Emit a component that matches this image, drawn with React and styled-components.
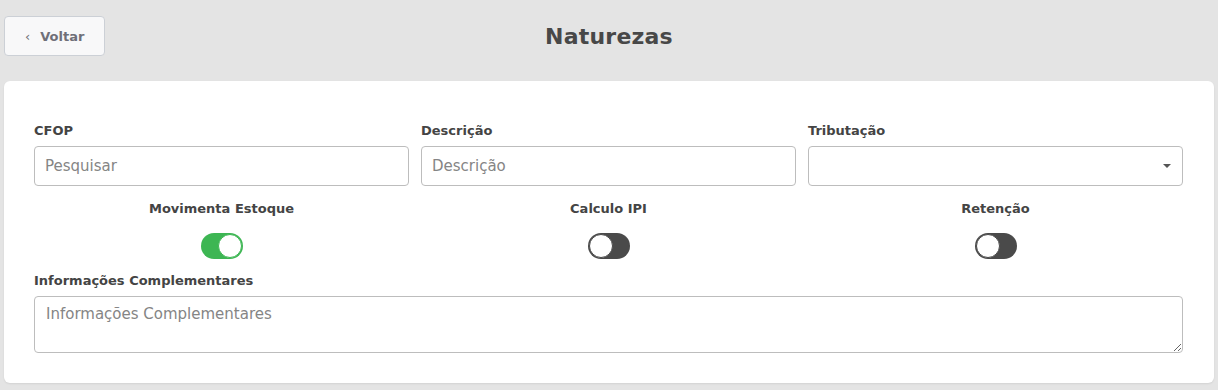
import React, { useState } from 'react';
import styled, { createGlobalStyle } from 'styled-components';

const GlobalStyle = createGlobalStyle`
  html, body {
    margin: 0;
    padding: 0;
    background: #e4e4e4;
    font-family: "DejaVu Sans", "Noto Sans", sans-serif;
  }
`;

const Page = styled.div`
  padding: 0 4px;
  min-height: 390px;
  box-sizing: border-box;
`;

const Header = styled.div`
  display: grid;
  grid-template-columns: 1fr auto 1fr;
  align-items: center;
  padding: 16px 0 25px;
`;

const BackButton = styled.button`
  justify-self: start;
  display: flex;
  align-items: center;
  gap: 10px;
  height: 40px;
  width: 101px;
  padding: 0 0 0 20px;
  border: 1px solid #ccd0d6;
  border-radius: 4px;
  background: #f8f8f9;
  color: #6f6f78;
  font-family: inherit;
  font-weight: bold;
  font-size: 13px;
  cursor: pointer;
  box-sizing: border-box;
`;

const Arrow = styled.span`
  font-weight: normal;
  font-size: 13px;
`;

const Title = styled.h1`
  margin: 0;
  font-size: 22px;
  font-weight: bold;
  color: #484848;
  letter-spacing: 0.2px;
`;

const Card = styled.div`
  background: #fff;
  border-radius: 6px;
  box-shadow: 0 1px 2px rgba(0, 0, 0, 0.08);
  padding: 42px 31px 30px 30px;
  display: flex;
  flex-direction: column;
`;

const Row = styled.div`
  display: grid;
  grid-template-columns: repeat(3, 1fr);
  column-gap: 12px;
`;

const Field = styled.div`
  display: flex;
  flex-direction: column;
  align-items: ${(p) => (p.$center ? 'center' : 'stretch')};
`;

const Label = styled.label`
  font-size: 13px;
  font-weight: bold;
  color: #444;
  margin-bottom: ${(p) => (p.$gap ? p.$gap : 7)}px;
  line-height: 16px;
`;

const Input = styled.input`
  height: 40px;
  box-sizing: border-box;
  border: 1px solid #bdbdbd;
  border-radius: 4px;
  padding: 0 10px;
  font-family: inherit;
  font-size: 15px;
  color: #444;
  outline: none;
  &::placeholder {
    color: #858585;
  }
`;

const SelectBox = styled.div`
  position: relative;
  height: 40px;
  box-sizing: border-box;
  border: 1px solid #bdbdbd;
  border-radius: 4px;
`;

const Caret = styled.span`
  position: absolute;
  right: 11px;
  top: 17px;
  width: 0;
  height: 0;
  border-left: 4px solid transparent;
  border-right: 4px solid transparent;
  border-top: 4px solid #555;
`;

const ToggleRow = styled(Row)`
  margin-top: 15px;
`;

const Switch = styled.button`
  position: relative;
  width: 42px;
  height: 26px;
  border-radius: 13px;
  border: none;
  padding: 0;
  background: ${(p) => (p.$on ? '#3db653' : '#4a4a4a')};
  cursor: pointer;
  &::after {
    content: '';
    position: absolute;
    top: 1px;
    left: ${(p) => (p.$on ? '17px' : '1px')};
    width: 24px;
    height: 24px;
    border-radius: 50%;
    background: #fff;
    box-sizing: border-box;
    border: 1px solid ${(p) => (p.$on ? '#3db653' : '#4a4a4a')};
  }
`;

const NotesField = styled(Field)`
  margin-top: 14px;
`;

const TextArea = styled.textarea`
  height: 57px;
  box-sizing: border-box;
  border: 1px solid #bdbdbd;
  border-radius: 4px;
  padding: 8px 11px;
  font-family: inherit;
  font-size: 15px;
  color: #444;
  outline: none;
  resize: vertical;
  &::placeholder {
    color: #858585;
  }
`;

export default function App() {
  const [toggles, setToggles] = useState({ estoque: true, ipi: false, retencao: false });
  const flip = (k) => setToggles((t) => ({ ...t, [k]: !t[k] }));

  return (
    <Page>
      <GlobalStyle />
      <Header>
        <BackButton>
          <Arrow>‹</Arrow>
          Voltar
        </BackButton>
        <Title>Naturezas</Title>
        <span />
      </Header>
      <Card>
        <Row>
          <Field>
            <Label>CFOP</Label>
            <Input placeholder="Pesquisar" />
          </Field>
          <Field>
            <Label>Descrição</Label>
            <Input placeholder="Descrição" />
          </Field>
          <Field>
            <Label>Tributação</Label>
            <SelectBox>
              <Caret />
            </SelectBox>
          </Field>
        </Row>
        <ToggleRow>
          <Field $center>
            <Label $gap={16}>Movimenta Estoque</Label>
            <Switch $on={toggles.estoque} onClick={() => flip('estoque')} />
          </Field>
          <Field $center>
            <Label $gap={16}>Calculo IPI</Label>
            <Switch $on={toggles.ipi} onClick={() => flip('ipi')} />
          </Field>
          <Field $center>
            <Label $gap={16}>Retenção</Label>
            <Switch $on={toggles.retencao} onClick={() => flip('retencao')} />
          </Field>
        </ToggleRow>
        <NotesField>
          <Label $gap={7}>Informações Complementares</Label>
          <TextArea placeholder="Informações Complementares" />
        </NotesField>
      </Card>
    </Page>
  );
}
